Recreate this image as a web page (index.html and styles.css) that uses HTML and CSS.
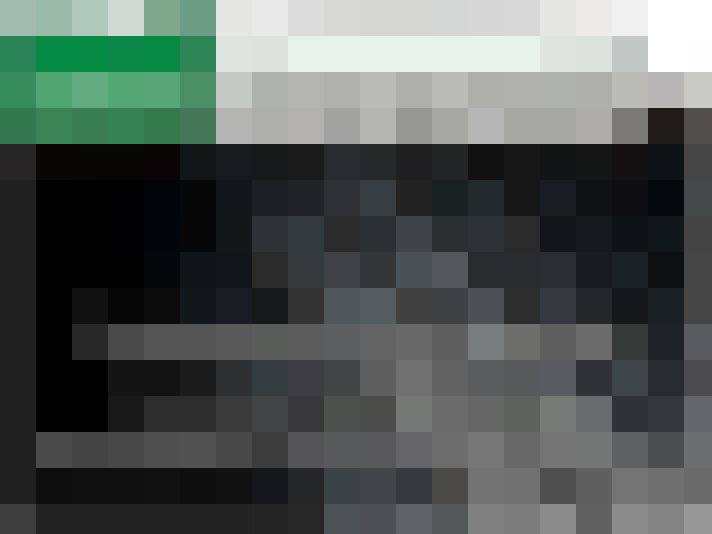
FILE: index.html
```html
<!DOCTYPE html>
<html lang="en">

<head>
    <meta charset="UTF-8">
    <meta name="viewport" content="width=device-width, initial-scale=1.0">
    <title>Document</title>
    <link rel="stylesheet" href="styles.css">
</head>

<body>
    <div class="mosaic"></div>
    <script>
        // one string per row, 20 blocks in each
        var rows = [
            'a4bcae 9bbba8 afc8ba d0d8d4 7ea88a 6d9c84 e6e6e5 e9e9e9 dcdcdd d8d8d6 d5d6d3 d5d6d3 d4d7d6 d8d7d7 d9d8d8 e6e6e5 ecebea f0f0f0 ffffff ffffff',
            '2b8455 058a43 058a43 0a8746 058944 2d8555 dde3df dce3df e8f2ec e7f2ec e8f2ec e8f2ec e8f2ec e8f2ec e8f2ec dee5e1 dce3de c3c8c6 ffffff fefefe',
            '368c5c 50a573 62aa7f 54a675 58a677 4b9065 c4cac6 afb1ad b4b4b2 b0b0ad bbbbb8 aeaeab bbbbb8 afafab b0b1ad aeb1ad afafac bbbbb7 b8b6b6 c9c9c6',
            '33784f 3a8455 387e52 378254 347a4d 437758 b5b5b3 aeaeab b2b1af a2a2a0 b5b5b2 969693 a7a7a4 b7b7b7 a7a7a4 a7a7a4 aeadaa 7b7a75 201b17 524e4a',
            '272526 0a0606 080605 070604 0a0606 131617 171b1e 18191b 1a1a1a 2a2b2e 262729 1f1f21 232426 111111 171717 121416 151717 131111 0d1314 464646',
            '202020 000000 000000 000003 010508 070707 14171a 1a2023 212326 303134 373e43 232323 192020 222a2d 171718 1a1c23 101113 0e0e10 05090b 434a49',
            '202020 000000 000000 000002 01060a 070708 131718 2c3236 333a3b 2a2a2b 2a3033 404447 2a2f2f 2d3335 2a2a2a 141519 141a1c 0e1315 0f1719 444445',
            '202020 000000 000000 000000 05070a 0f1519 12161b 2a2a2b 33393c 414245 343536 4a5258 53575a 292a2b 282c2e 2a2e31 181c1f 1b2226 0e0f11 454546',
            '202020 000000 111111 060606 0b0b0c 12171c 191d23 171819 343434 4f575c 555c60 414141 404144 4f5055 2d2d2e 35383e 252629 16171a 1a2124 464546',
            '202020 000000 282828 4a4a4a 545454 545454 585858 5a5c5a 5c5c5d 5d5e5f 636363 676767 5f5f5f 797c7c 6e6f6d 5f5f5f 6c6c6d 353a39 1d2225 5a5b5f',
            '202020 000000 000000 141414 131313 1b1b1b 2f3032 343c40 3e3e42 434445 5f5f60 717172 626263 5b5c5d 58595b 5a5b60 313236 3e4649 272b2d 4b4b4d',
            '202020 000000 000000 181818 2d2d2d 2d2d2d 3a3a3a 434446 39393b 4f514e 4c4d4a 767876 6b6b6b 666666 5f615f 787a78 6a6b6d 2f3335 333739 64676a',
            '202020 4a4a4a 444444 484848 505050 525252 484848 3c3c3d 555557 58595b 58585a 656567 6d6d6d 777777 686868 757575 747675 5f6062 4a4e4f 6d6e70',
            '202020 0e0e0e 0f0f0f 0f0f0f 111111 0e0e0e 111111 15171a 252627 3c4346 3f4548 353a3d 4c4a49 737373 717171 4e4e4e 5f5f5f 747474 6f6f6f 6a6a6a',
            '3e3e3e 232323 232323 232323 222222 222222 222222 252526 272728 4d5256 4f5054 5f6368 535758 808080 7b7b7b 8c8c8c 606060 8b8b8b 838383 979797'
        ];
        var mosaic = document.querySelector('.mosaic');

        rows.forEach(function (row) {
            row.split(' ').forEach(function (color) {
                var block = document.createElement('div');
                block.className = 'block';
                block.style.backgroundColor = '#' + color;
                mosaic.appendChild(block);
            });
        });
    </script>
</body>

</html>
```

FILE: styles.css
```css
body {
    margin: 0;
    background-color: #000;
    overflow: hidden;
}

.mosaic {
    display: grid;
    grid-template-columns: repeat(19, 36px) 28px;
    grid-template-rows: repeat(14, 36px) 30px;
    width: 712px;
    height: 534px;
}

.mosaic .block {
    min-width: 0;
}
```
